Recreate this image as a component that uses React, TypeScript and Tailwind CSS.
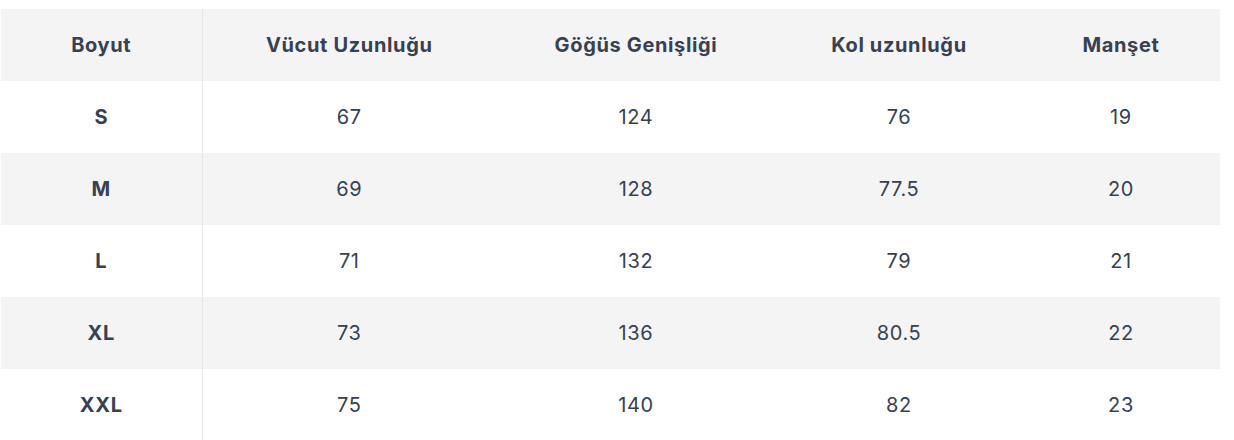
const rows = [
  ['S', '67', '124', '76', '19'],
  ['M', '69', '128', '77.5', '20'],
  ['L', '71', '132', '79', '21'],
  ['XL', '73', '136', '80.5', '22'],
  ['XXL', '75', '140', '82', '23'],
]

const headers = ['Boyut', 'Vücut Uzunluğu', 'Göğüs Genişliği', 'Kol uzunluğu', 'Manşet']
const widths = ['w-[201px]', 'w-[294px]', 'w-[280px]', 'w-[246px]', 'w-[198px]']

export default function App() {
  return (
    <div className="bg-white pt-[9px] pl-[1px] font-['Inter',sans-serif] text-[#374151] tracking-[0.04em]">
      <table className="table-fixed border-collapse w-[1219px]">
        <colgroup>
          {widths.map((w, i) => (
            <col key={i} className={w} />
          ))}
        </colgroup>
        <thead>
          <tr className="bg-[#f4f4f5] h-[72px]">
            {headers.map((h, i) => (
              <th
                key={h}
                className={`text-center text-[20px] font-bold ${i === 0 ? 'border-r border-[#e5e7eb]' : ''}`}
              >
                {h}
              </th>
            ))}
          </tr>
        </thead>
        <tbody>
          {rows.map((r, ri) => (
            <tr key={r[0]} className={`h-[72px] ${ri % 2 === 1 ? 'bg-[#f4f4f5]' : 'bg-white'}`}>
              {r.map((c, ci) => (
                <td
                  key={ci}
                  className={
                    ci === 0
                      ? 'text-center text-[20px] font-bold border-r border-[#e5e7eb]'
                      : 'text-center text-[20px] font-normal'
                  }
                >
                  {c}
                </td>
              ))}
            </tr>
          ))}
        </tbody>
      </table>
    </div>
  )
}
